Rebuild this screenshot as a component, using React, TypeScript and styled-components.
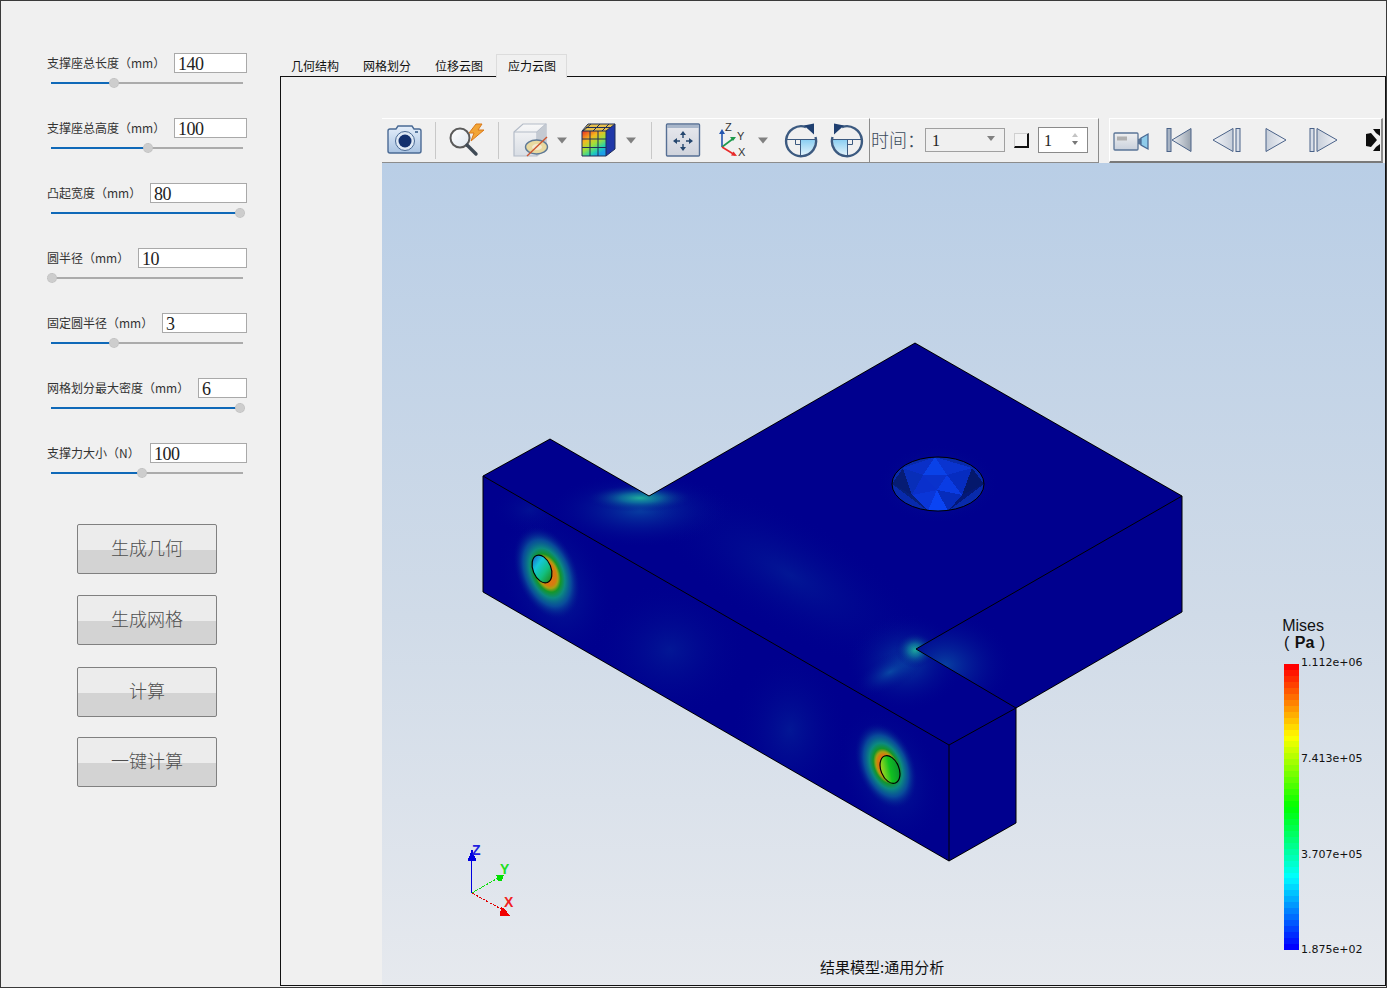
import React from "react";
import styled, { createGlobalStyle } from "styled-components";

const Global = createGlobalStyle`
  html, body { margin: 0; padding: 0; background: #f0f0f0; }
  * { box-sizing: border-box; }
`;
const CJK = `"Noto Sans CJK SC", "Liberation Sans", sans-serif`;
const SERIF = `"Liberation Serif", "Noto Sans CJK SC", serif`;

const Windowed = styled.div`
  width: 1387px; height: 988px; display: flex; overflow: hidden;
  background: #f0f0f0; border: 1px solid #3a3a3a; font-family: ${CJK};
`;
const Sidebar = styled.aside`
  width: 279px; flex: none; padding: 52px 0 0 46px;
`;
const ParamBlock = styled.div`
  width: 200px; height: 65px; display: flex; flex-direction: column;
`;
const ParamRow = styled.div`
  height: 20px; display: flex; align-items: center; justify-content: space-between;
`;
const ParamLabel = styled.label`
  font-size: 12px; line-height: 16px; margin-bottom: 1px; color: #333; white-space: nowrap;
`;
const ParamValue = styled.div<{ $w: number }>`
  width: ${p => p.$w}px; height: 20px; background: #fff; border: 1px solid #a9a9a9;
  padding-left: 3px; font: 18px/20px ${SERIF}; letter-spacing: -0.5px; color: #222;
`;
const Track = styled.div`
  position: relative; width: 192px; height: 2px; margin: 9px 0 0 4px; background: #ababab;
`;
const TrackFill = styled.div`
  height: 100%; background: #0f69b8;
`;
const Thumb = styled.div`
  position: absolute; top: -4px; width: 10px; height: 10px; margin-left: -5px;
  border-radius: 50%; background: #cdcdcd; border: 1px dotted #bdbdbd;
`;
const ActionList = styled.div`
  margin: 16px 0 0 30px; display: flex; flex-direction: column; width: 140px;
`;
const ActionButton = styled.button<{ $top: number }>`
  width: 140px; height: 50px; margin-top: ${p => p.$top}px; padding: 0 0 4px;
  border: 1px solid #808080; border-radius: 2px;
  background: linear-gradient(#ececec 0, #ececec 52%, #d3d3d3 52%, #d3d3d3 100%);
  font: 300 18px/1 ${CJK}; color: #4f4f4f;
`;
const Main = styled.main`
  flex: 1; min-width: 0; padding: 53px 0 1px; display: flex; flex-direction: column;
`;
const Tabs = styled.div`
  display: flex; height: 22px; position: relative; z-index: 1;
`;
const Tab = styled.div<{ $active?: boolean }>`
  width: 72px; height: ${p => (p.$active ? 24 : 22)}px; padding: ${p => (p.$active ? 2 : 3)}px 0 0 11px;
  font-size: 12px; line-height: 18px; color: #111; white-space: nowrap;
  ${p => p.$active && `background:#f0f0f0;border:1px solid #dcdcdc;border-bottom:none;width:71px;margin-right:1px;padding-left:10px;text-indent:1px;`}
`;
const Panel = styled.section`
  flex: 1; min-height: 0; border: 1px solid #111; padding: 41px 0 0 101px;
  display: flex; flex-direction: column;
`;
const Toolbar = styled.div`
  height: 45px; flex: none; display: flex;
`;
const ToolSection = styled.div<{ $w: number }>`
  width: ${p => p.$w}px; flex: none; height: 45px; display: flex; align-items: flex-start;
  border-top: 1px solid #fff; border-bottom: 1px solid #8c8c8c; border-right: 1px solid #8c8c8c;
`;
const RaisedSection = styled.div`
  width: 274px; margin-left: 10px; height: 45px; display: flex; align-items: flex-start;
  border-top: 1px solid #fff; border-left: 1px solid #fff;
  border-bottom: 2px solid #7a7a7a; border-right: 2px solid #8c8c8c;
`;
const ToolIcon = styled.svg<{ $gap: number }>`
  flex: none; height: 43px; margin-left: ${p => p.$gap}px; display: block;
`;
const ToolSep = styled.div<{ $gap: number }>`
  flex: none; width: 1px; height: 37px; margin: 3px 0 0 ${p => p.$gap}px; background: #c8c8c8;
`;
const TimeLabel = styled.span`
  width: 54px; margin: 10px 0 0 1px; font: 300 18px/20px ${CJK}; color: #3a4a5a; white-space: nowrap;
`;
const Combo = styled.div`
  width: 80px; height: 24px; margin-top: 9px; border: 1px solid #a0a0a0; padding-left: 6px;
  display: flex; justify-content: space-between; font: 16px/23px ${SERIF}; color: #222;
`;
const ComboCaret = styled.i`
  width: 0; height: 0; margin: 7px 9px 0 0; border: 4.5px solid transparent; border-top: 5px solid #808080; border-bottom: none;
`;
const Check = styled.div`
  width: 15px; height: 15px; margin: 14px 0 0 9px; background: #f4f4f4;
  border-style: solid; border-width: 1px 2px 2px 1px; border-color: #d0d0d0 #111 #111 #d0d0d0;
`;
const Spin = styled.div`
  width: 50px; height: 26px; margin: 8px 0 0 9px; border: 1px solid #8a8a8a; background: #fff;
  padding-left: 5px; display: flex; justify-content: space-between; font: 16px/25px ${SERIF}; color: #222;
`;
const SpinArrows = styled.div`
  width: 8px; margin: 5px 7px 0 0; display: flex; flex-direction: column; gap: 4px;
`;
const SpinUp = styled.i`
  width: 0; height: 0; border: 3.5px solid transparent; border-bottom: 4px solid #c4c4c4; border-top: none;
`;
const SpinDown = styled.i`
  width: 0; height: 0; border: 3.5px solid transparent; border-top: 4px solid #777; border-bottom: none;
`;
const Viewport = styled.div`
  flex: 1; min-height: 0; position: relative; overflow: hidden;
  background: linear-gradient(#b9cee6 0%, #d0dbe8 55%, #e6e9ee 100%);
`;
const Scene = styled.svg`
  position: absolute; inset: 0; width: 100%; height: 100%; display: block;
`;
const Overlay = styled.div<{ $x: number; $y: number }>`
  position: absolute; left: ${p => p.$x - 382}px; top: ${p => p.$y - 163}px; white-space: nowrap;
`;
const LegendTitle = styled(Overlay)`
  font: 16px/17px "Liberation Sans", sans-serif; color: #111; text-align: center;
`;
const LegendUnit = styled.span`
  display: block; margin-left: 3px; word-spacing: 1px;
`;
const LegendUnitName = styled.b`
  font-weight: 700;
`;
const LegendValue = styled(Overlay)`
  font: 11px/14px "DejaVu Sans", sans-serif; color: #111;
`;
const ColorBar = styled(Overlay)`
  width: 15px; height: 286px;
`;
const Caption = styled(Overlay)`
  font-size: 15px; line-height: 20px; color: #111;
`;

const params = [
  { label: "支撑座总长度（mm）", value: "140", w: 73, at: 63 },
  { label: "支撑座总高度（mm）", value: "100", w: 73, at: 97 },
  { label: "凸起宽度（mm）", value: "80", w: 97, at: 189 },
  { label: "圆半径（mm）", value: "10", w: 109, at: 1 },
  { label: "固定圆半径（mm）", value: "3", w: 85, at: 63 },
  { label: "网格划分最大密度（mm）", value: "6", w: 49, at: 189 },
  { label: "支撑力大小（N）", value: "100", w: 97, at: 91 },
];
const actions = [
  { label: "生成几何", top: 0 },
  { label: "生成网格", top: 21 },
  { label: "计算", top: 22 },
  { label: "一键计算", top: 20 },
];
const tabs = ["几何结构", "网格划分", "位移云图", "应力云图"];

const bandColors = (() => {
  const out: string[] = [];
  const n = 48;
  const stops: [number, number[]][] = [
    [0, [255, 0, 0]], [0.25, [255, 255, 0]], [0.5, [0, 255, 0]], [0.75, [0, 255, 255]], [1, [0, 0, 255]],
  ];
  for (let i = 0; i < n; i++) {
    const t = i / (n - 1);
    let k = 0;
    while (k < stops.length - 2 && t > stops[k + 1][0]) k++;
    const [a, ca] = stops[k];
    const [b, cb] = stops[k + 1];
    const f = (t - a) / (b - a);
    out.push(`rgb(${ca.map((c, j) => Math.round(c + (cb[j] - c) * f)).join(",")})`);
  }
  return out;
})();

const STROKE = "#4a6a94";
const Caret = ({ x }: { x: number }) => <path d={`M${x - 5} 137.5h10l-5 6z`} fill="#808080" />;

const Camera = () => (
  <ToolIcon $gap={4} viewBox="386 119 38 43" width={38}>
    <defs>
      <linearGradient id="camBody" x1="0" y1="0" x2="0" y2="1"><stop offset="0" stopColor="#e4eefa" /><stop offset="1" stopColor="#a9c3e2" /></linearGradient>
    </defs>
    <path d="M388 131a2 2 0 0 1 2-2h6l2-3h14l2 3h5a2 2 0 0 1 2 2v20a2 2 0 0 1-2 2h-29a2 2 0 0 1-2-2z" fill="url(#camBody)" stroke={STROKE} strokeWidth="1.4" />
    <circle cx="405" cy="141" r="9.5" fill="#dfe9f5" stroke="#4a6a94" />
    <circle cx="405" cy="141" r="6.5" fill="#12306e" />
    <rect x="415" y="131" width="3" height="2" fill="#5a7aa0" />
  </ToolIcon>
);
const SearchBolt = () => (
  <ToolIcon $gap={12} viewBox="448 119 38 43" width={38}>
    <defs><linearGradient id="lens" x1="0" y1="0" x2="1" y2="1"><stop offset="0" stopColor="#fff" /><stop offset="1" stopColor="#dfe6ee" /></linearGradient></defs>
    <path d="M476 124l-7 9h5l-3 8 13-11h-6l4-6z" fill="#f2a536" stroke="#d9781a" strokeWidth="1" />
    <circle cx="460" cy="138" r="9.5" fill="url(#lens)" stroke="#5a5a5a" strokeWidth="2" />
    <path d="M467 145l9 9" stroke="#3f4a55" strokeWidth="3.4" strokeLinecap="round" />
  </ToolIcon>
);
const CubeSlice = () => (
  <ToolIcon $gap={13} viewBox="512 119 58 43" width={58}>
    <defs><linearGradient id="cubeF" x1="0" y1="0" x2="0" y2="1"><stop offset="0" stopColor="#f8f8f8" /><stop offset="1" stopColor="#d8dde4" /></linearGradient></defs>
    <path d="M514 132l9-8h23v24l-9 8h-23z" fill="url(#cubeF)" stroke="#b4bcc8" strokeWidth="1.2" />
    <path d="M514 132h23v24M537 132l9-8" fill="none" stroke="#b4bcc8" strokeWidth="1.2" />
    <path d="M537 132l9-8v24l-9 8z" fill="#c4cad2" />
    <ellipse cx="536.5" cy="147" rx="11" ry="7" fill="#e8d9a0" stroke="#5f7a96" strokeWidth="1.4" />
    <ellipse cx="537" cy="147" rx="5" ry="3" fill="#f3ead0" />
    <path d="M527 156l20-19" stroke="#cc5530" strokeWidth="1.4" />
    <Caret x={562} />
  </ToolIcon>
);
const ColorCube = () => (
  <ToolIcon $gap={10} viewBox="580 119 60 43" width={60}>
    <defs>
      <linearGradient id="rb" x1="0" y1="0" x2="0.6" y2="1">
        <stop offset="0" stopColor="#ee2a22" /><stop offset=".35" stopColor="#f6b81e" /><stop offset=".6" stopColor="#9ee03a" /><stop offset=".85" stopColor="#22d0b0" /><stop offset="1" stopColor="#1ca0e8" />
      </linearGradient>
    </defs>
    <path d="M582 131l6-7h27l-8 7z" fill="#e6c050" />
    <path d="M606 131l9-7v25l-9 7z" fill="#2038a8" />
    <rect x="582" y="131" width="24" height="25" fill="url(#rb)" />
    <path d="M582 131h24v25h-24zM582 139h24M582 147.500h24M590 131v25M598 131v25M582 131l6-7h27l-9 7M606 156l9-7v-25M591 124l-8 7M600 124l-7 7M609 124l-7 7M586 127.500h25" fill="none" stroke="#1e2e58" strokeWidth="1" />
    <Caret x={631} />
  </ToolIcon>
);
const PanIcon = () => (
  <ToolIcon $gap={12} viewBox="664 119 38 43" width={38}>
    <defs><linearGradient id="panBg" x1="0" y1="0" x2="0" y2="1"><stop offset="0" stopColor="#e8e9ee" /><stop offset="1" stopColor="#cfd3dc" /></linearGradient></defs>
    <rect x="666.500" y="124" width="33" height="32" rx="1" fill="url(#panBg)" stroke="#566f94" strokeWidth="1.4" />
    <rect x="667" y="125" width="32" height="3" fill="#a8b6ca" />
    <path d="M683 134v4M683 144v4M676 141h4M686 141h4" stroke="#24466e" strokeWidth="1.4" />
    <path d="M683 131l-3 4h6zM683 151l-3-4h6zM673 141l4-3v6zM693 141l-4-3v6z" fill="#24466e" />
  </ToolIcon>
);
const AxesIcon = () => (
  <ToolIcon $gap={14} viewBox="716 119 54 43" width={54}>
    <path d="M722 147v-15" stroke="#2456b0" strokeWidth="1.6" />
    <path d="M722 129l-3 5h6z" fill="#2456b0" />
    <path d="M722 147l12-9" stroke="#1f9a4c" strokeWidth="1.6" />
    <path d="M736 137l-6 0 3 4z" fill="#1f9a4c" />
    <path d="M722 147l13 8" stroke="#e82a2a" strokeWidth="1.6" />
    <path d="M737 156l-6-.5 2.500-4z" fill="#e82a2a" />
    <text x="725" y="131" fontSize="11" fontFamily="Liberation Sans" fill="#333">Z</text>
    <text x="737" y="140" fontSize="11" fontFamily="Liberation Sans" fill="#333">Y</text>
    <text x="738" y="156" fontSize="11" fontFamily="Liberation Sans" fill="#333">X</text>
    <Caret x={763} />
  </ToolIcon>
);
const MirrorSvg = styled(ToolIcon)<{ $mirror?: boolean }>`
  ${p => p.$mirror && "transform: scaleX(-1);"}
`;
const RotateIcon = ({ mirror, gap, id }: { mirror?: boolean; gap: number; id: string }) => (
  <MirrorSvg $gap={gap} $mirror={mirror} viewBox="782 119 36 43" width={36}>
    <defs><linearGradient id={id} x1="0" y1="0" x2="0" y2="1"><stop offset="0" stopColor="#8ccff2" /><stop offset="1" stopColor="#e2f3fb" /></linearGradient></defs>
    <path d="M800 140h15a15 15 0 0 1-15 15.500z" fill={`url(#${id})`} />
    <path d="M806 127a15 15 0 1 0 9.500 10" fill="none" stroke="#3c5a80" strokeWidth="2.400" />
    <path d="M785 139.500h30M800.500 140v15M795.500 140v4.500h5" fill="none" stroke="#3c5a80" strokeWidth="1" />
    <path d="M804 125.500l10-2v11z" fill="#1f3f70" />
  </MirrorSvg>
);
const RecordIcon = () => (
  <ToolIcon $gap={3} viewBox="1113 119 38 43" width={38}>
    <defs><linearGradient id="recB" x1="0" y1="0" x2="0" y2="1"><stop offset="0" stopColor="#f0f0f0" /><stop offset="1" stopColor="#c8d0dc" /></linearGradient></defs>
    <rect x="1114" y="133" width="24" height="17" rx="1" fill="url(#recB)" stroke="#5a7496" strokeWidth="1.3" />
    <rect x="1117" y="136.500" width="10" height="4" fill="#b0b0b0" />
    <path d="M1138 139l3-1v7l-3-1z" fill="#5a7496" />
    <path d="M1141 138l7-4v15l-7-4z" fill="#8ecbea" stroke="#4a6a94" strokeWidth="1.3" />
  </ToolIcon>
);
const transportGrad = (id: string, a: string, b: string) => (
  <defs><linearGradient id={id} x1="0" y1="0" x2="1" y2="0"><stop offset="0" stopColor={a} /><stop offset="1" stopColor={b} /></linearGradient></defs>
);
const FirstIcon = () => (
  <ToolIcon $gap={14} viewBox="1165 119 29 43" width={29}>
    {transportGrad("tFirst", "#eef0f4", "#98a2ae")}
    <rect x="1167" y="128.500" width="4" height="23" fill="#a8b4c4" stroke="#4a6288" />
    <path d="M1191 128.500v23l-19-11.500z" fill="url(#tFirst)" stroke="#4a6288" />
  </ToolIcon>
);
const PrevIcon = () => (
  <ToolIcon $gap={18} viewBox="1212 119 30 43" width={30}>
    {transportGrad("tPrev", "#f4f5f8", "#c6ceda")}
    <path d="M1233 128.500v23l-20-11.500z" fill="url(#tPrev)" stroke="#4a6288" />
    <rect x="1236" y="128.500" width="4" height="23" fill="#d8dee8" stroke="#4a6288" />
  </ToolIcon>
);
const PlayIcon = () => (
  <ToolIcon $gap={23} viewBox="1265 119 23 43" width={23}>
    {transportGrad("tPlay", "#c6ceda", "#f4f5f8")}
    <path d="M1266 128.500v23l20-11.500z" fill="url(#tPlay)" stroke="#4a6288" />
  </ToolIcon>
);
const NextIcon = () => (
  <ToolIcon $gap={21} viewBox="1309 119 30 43" width={30}>
    {transportGrad("tNext", "#c6ceda", "#f4f5f8")}
    <rect x="1310" y="128.500" width="4" height="23" fill="#d8dee8" stroke="#4a6288" />
    <path d="M1317 128.500v23l20-11.500z" fill="url(#tNext)" stroke="#4a6288" />
  </ToolIcon>
);
const MoreIcon = () => (
  <ToolIcon $gap={26} viewBox="1365 119 16 43" width={16}>
    <defs><filter id="moreBlur"><feGaussianBlur stdDeviation=".6" /></filter></defs>
    <g filter="url(#moreBlur)">
      <path d="M1373 129h7v7l-4-3z" fill="#111" />
      <path d="M1366 134l5-1 6 7-6 7-5-1z" fill="#111" />
      <path d="M1373 151h7v-7l-4 3z" fill="#111" />
    </g>
  </ToolIcon>
);

const TOP = "483,476 550,439 649,496 915,343 1182,496 916,649 1016,708 949,745";
const FRONT = "483,476 949,745 949,861 483,592";
const END = "949,745 1016,708 1016,823 949,861";
const SIDE = "916,649 1182,496 1182,612 1016,708";
const BLUE = "#00008e";

const Facets: [string, string][] = [
  ["935,457 923,475 947,475", "#0a42e8"],
  ["923,475 947,475 937,490", "#0a32cc"],
  ["947,475 962,495 937,490", "#0a3ce4"],
  ["923,475 912,495 937,490", "#0a30cc"],
  ["937,490 928,511 948,511", "#0a44f4"],
  ["912,495 937,490 928,511", "#0a36d8"],
  ["962,495 948,511 937,490", "#062cbc"],
  ["935,457 923,475 903,468", "#0a30c8"],
  ["935,457 947,475 972,468", "#0a34d0"],
  ["903,468 923,475 912,495", "#082eb8"],
  ["972,468 947,475 962,495", "#062cc0"],
  ["903,468 892,484 912,495", "#061c74"],
  ["972,468 984,484 962,495", "#04186c"],
  ["892,484 912,495 928,511", "#06207c"],
  ["984,484 962,495 948,511", "#041878"],
];

const Model = () => (
  <g>
    <defs>
      <clipPath id="cTop"><polygon points={TOP} /></clipPath>
      <clipPath id="cFront"><polygon points={FRONT} /></clipPath>
      <clipPath id="cSide"><polygon points={SIDE} /></clipPath>
      <clipPath id="cHole"><ellipse cx="938" cy="484" rx="46" ry="27" /></clipPath>
      <radialGradient id="holeGlow">
        <stop offset="0" stopColor="#e8780e" />
        <stop offset=".26" stopColor="#d87a10" />
        <stop offset=".32" stopColor="#a8a010" />
        <stop offset=".4" stopColor="#14962a" />
        <stop offset=".52" stopColor="#0c8a80" />
        <stop offset=".7" stopColor="#0a5a9c" stopOpacity=".8" />
        <stop offset="1" stopColor={BLUE} stopOpacity="0" />
      </radialGradient>
      <radialGradient id="teal">
        <stop offset="0" stopColor="#1fae9c" />
        <stop offset=".35" stopColor="#0e7a9e" stopOpacity=".8" />
        <stop offset="1" stopColor={BLUE} stopOpacity="0" />
      </radialGradient>
      <radialGradient id="faint">
        <stop offset="0" stopColor="#0a55a8" stopOpacity=".75" />
        <stop offset="1" stopColor={BLUE} stopOpacity="0" />
      </radialGradient>
      <linearGradient id="hole1" x1="0" y1="0" x2="0.4" y2="1">
        <stop offset="0" stopColor="#1c4cc8" />
        <stop offset=".4" stopColor="#14c8d8" />
        <stop offset=".75" stopColor="#12c080" />
        <stop offset="1" stopColor="#1c9a38" />
      </linearGradient>
      <linearGradient id="hole2" x1="0" y1="0" x2="1" y2="0.3">
        <stop offset="0" stopColor="#d8c820" />
        <stop offset=".3" stopColor="#70d020" />
        <stop offset=".6" stopColor="#10c020" />
        <stop offset="1" stopColor="#0c9a2c" />
      </linearGradient>
    </defs>
    <g shapeRendering="crispEdges">
      <polygon points={TOP} fill={BLUE} />
      <polygon points={FRONT} fill={BLUE} />
      <polygon points={END} fill={BLUE} />
      <polygon points={SIDE} fill={BLUE} />
    </g>
    <g clipPath="url(#cTop)">
      <ellipse cx="640" cy="510" rx="95" ry="38" fill="url(#faint)" />
      <ellipse cx="640" cy="498" rx="55" ry="14" fill="url(#teal)" />
      <ellipse cx="905" cy="662" rx="60" ry="50" fill="url(#faint)" />
      <ellipse cx="890" cy="672" rx="40" ry="18" fill="url(#faint)" transform="rotate(-28 890 672)" />
      <ellipse cx="915" cy="650" rx="20" ry="18" fill="url(#teal)" />
      <ellipse cx="938" cy="484" rx="62" ry="40" fill="url(#faint)" opacity=".6" />
      <ellipse cx="790" cy="575" rx="160" ry="60" fill="url(#faint)" opacity=".35" transform="rotate(30 790 575)" />
    </g>
    <g clipPath="url(#cFront)">
      <ellipse cx="555" cy="585" rx="55" ry="80" fill="url(#faint)" opacity=".55" transform="rotate(-22 555 585)" />
      <ellipse cx="890" cy="775" rx="50" ry="75" fill="url(#faint)" opacity=".55" transform="rotate(-22 890 775)" />
      <ellipse cx="547" cy="573" rx="31" ry="50" fill="url(#holeGlow)" transform="rotate(-22 547 573)" />
      <ellipse cx="886" cy="766" rx="29" ry="46" fill="url(#holeGlow)" transform="rotate(-22 886 766)" />
      <ellipse cx="670" cy="650" rx="80" ry="70" fill="url(#faint)" opacity=".35" />
      <ellipse cx="790" cy="730" rx="60" ry="80" fill="url(#faint)" opacity=".35" />
      <ellipse cx="530" cy="510" rx="40" ry="26" fill="url(#faint)" opacity=".25" />
    </g>
    <g clipPath="url(#cSide)">
      <ellipse cx="945" cy="665" rx="70" ry="55" fill="url(#faint)" />
    </g>
    <g clipPath="url(#cHole)" shapeRendering="crispEdges">
      <ellipse cx="938" cy="484" rx="46" ry="27" fill="#082aac" />
      {Facets.map(([pts, c]) => <polygon key={pts} points={pts} fill={c} />)}
    </g>
    <ellipse cx="938" cy="484" rx="46" ry="27" fill="none" stroke="#000" strokeWidth="1" />
    <ellipse cx="542" cy="569" rx="9" ry="14.500" fill="url(#hole1)" stroke="#000" strokeWidth="1.200" transform="rotate(-22 542 569)" />
    <ellipse cx="890" cy="769.500" rx="9" ry="14.500" fill="url(#hole2)" stroke="#000" strokeWidth="1.200" transform="rotate(-22 890 769.500)" />
    <path d="M550 439L483 476V592L949 861L1016 823V708L1182 612V496L915 343L649 496L550 439Z" fill="none" stroke="#000" strokeWidth="1" />
    <path d="M483 476L949 745L1016 708L916 649L1182 496M949 745V861" fill="none" stroke="#000" strokeWidth="1" />
  </g>
);

const Triad = () => (
  <g fontFamily="Liberation Sans" fontWeight="700" fontSize="14" shapeRendering="crispEdges">
    <path d="M471.500 893V856" stroke="#0000e0" strokeWidth="1" />
    <path d="M472 849l-4.500 12h9z" fill="#0000e0" />
    <text x="472" y="855" fill="#2020e0">Z</text>
    <path d="M472 893l26-15" stroke="#10e010" strokeWidth="1" strokeDasharray="3 1" />
    <path d="M504 875l-8-.5 2 7 4-1z" fill="#00e000" />
    <text x="500" y="874" fill="#20e020">Y</text>
    <path d="M472 893l29 16" stroke="#e00000" strokeWidth="1" strokeDasharray="3 1" />
    <path d="M510 916h-10l1-9 3.500 1.500z" fill="#f00000" />
    <text x="504" y="907" fill="#f02020">X</text>
  </g>
);

export default function App() {
  return (
    <>
      <Global />
      <Windowed>
        <Sidebar>
          {params.map(p => (
            <ParamBlock key={p.label}>
              <ParamRow>
                <ParamLabel>{p.label}</ParamLabel>
                <ParamValue $w={p.w}>{p.value}</ParamValue>
              </ParamRow>
              <Track>
                <TrackFill style={{ width: p.at }} />
                <Thumb style={{ left: p.at }} />
              </Track>
            </ParamBlock>
          ))}
          <ActionList>
            {actions.map(a => <ActionButton key={a.label} $top={a.top}>{a.label}</ActionButton>)}
          </ActionList>
        </Sidebar>
        <Main>
          <Tabs>
            {tabs.map((t, i) => <Tab key={t} $active={i === 3}>{t}</Tab>)}
          </Tabs>
          <Panel>
            <Toolbar>
              <ToolSection $w={488}>
                <Camera />
                <ToolSep $gap={11} />
                <SearchBolt />
                <ToolSep $gap={12} />
                <CubeSlice />
                <ColorCube />
                <ToolSep $gap={11} />
                <PanIcon />
                <AxesIcon />
                <RotateIcon gap={12} id="rotA" />
                <RotateIcon gap={12} id="rotB" mirror />
              </ToolSection>
              <ToolSection $w={229}>
                <TimeLabel>时间：</TimeLabel>
                <Combo>1<ComboCaret /></Combo>
                <Check />
                <Spin>1<SpinArrows><SpinUp /><SpinDown /></SpinArrows></Spin>
              </ToolSection>
              <RaisedSection>
                <RecordIcon />
                <FirstIcon />
                <PrevIcon />
                <PlayIcon />
                <NextIcon />
                <MoreIcon />
              </RaisedSection>
            </Toolbar>
            <Viewport>
              <Scene viewBox="382 163 1003 822" preserveAspectRatio="none">
                <Model />
                <Triad />
              </Scene>
              <LegendTitle $x={1281} $y={617}>Mises<LegendUnit>( <LegendUnitName>Pa</LegendUnitName> )</LegendUnit></LegendTitle>
              <ColorBar $x={1284} $y={664} style={{ background: `linear-gradient(${bandColors.map((c, i) => `${c} ${(i / 48) * 100}% ${((i + 1) / 48) * 100}%`).join(",")})` }} />
              <LegendValue $x={1301} $y={656}>1.112e+06</LegendValue>
              <LegendValue $x={1301} $y={752}>7.413e+05</LegendValue>
              <LegendValue $x={1301} $y={848}>3.707e+05</LegendValue>
              <LegendValue $x={1301} $y={943}>1.875e+02</LegendValue>
              <Caption $x={820} $y={957}>结果模型:通用分析</Caption>
            </Viewport>
          </Panel>
        </Main>
      </Windowed>
    </>
  );
}
